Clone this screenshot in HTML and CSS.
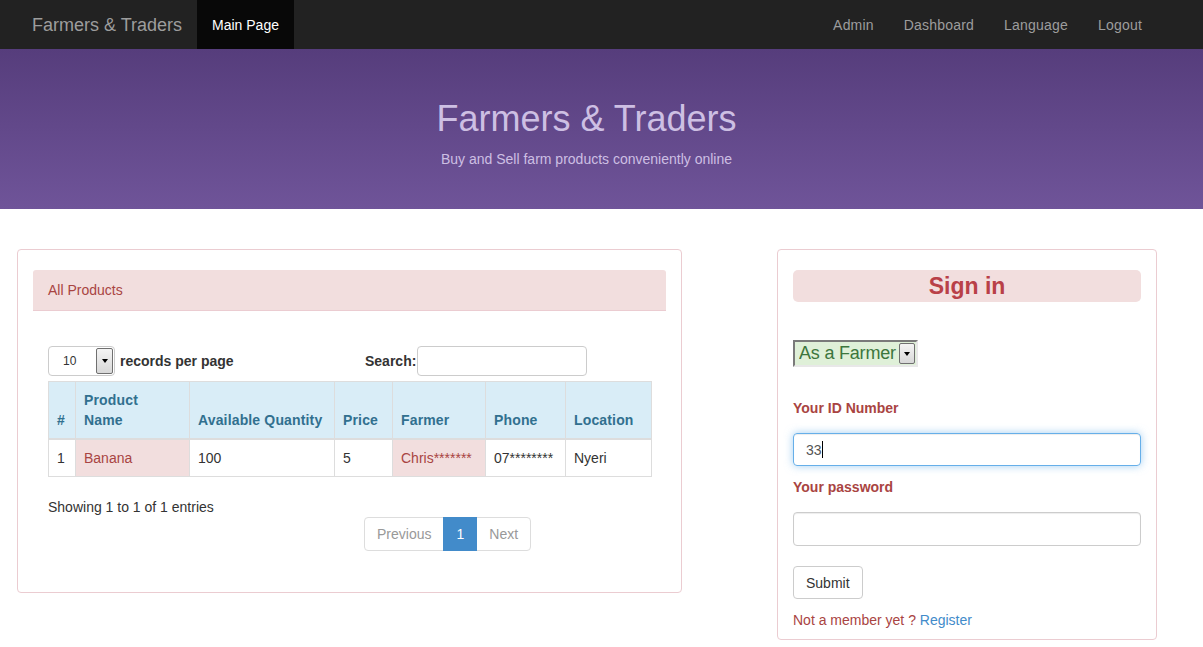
FILE: index.html
```html
<!DOCTYPE html>
<html lang="en">
<head>
<meta charset="utf-8">
<title>Farmers &amp; Traders</title>
<link rel="stylesheet" href="styles.css">
</head>
<body>
<nav class="navbar">
  <a class="brand" href="#">Farmers &amp; Traders</a>
  <ul class="nav">
    <li class="active"><a href="#">Main Page</a></li>
  </ul>
  <ul class="nav nav-right">
    <li><a href="#">Admin</a></li>
    <li><a href="#">Dashboard</a></li>
    <li><a href="#">Language</a></li>
    <li><a href="#">Logout</a></li>
  </ul>
</nav>

<header class="jumbotron">
  <h1>Farmers &amp; Traders</h1>
  <p>Buy and Sell farm products conveniently online</p>
</header>

<main class="content">
  <section class="panel panel-products">
    <div class="panel-heading">All Products</div>
    <div class="dt-wrapper">
      <div class="dt-top">
        <div class="length">
          <div class="mini-select"><span class="mini-val">10</span><span class="arrow-btn"><span class="tri"></span></span></div>
          <span class="bold-label">records per page</span>
        </div>
        <div class="search">
          <span class="bold-label">Search:</span>
          <div class="search-input"></div>
        </div>
      </div>
      <table class="products">
        <colgroup>
          <col class="c-num"><col class="c-name"><col class="c-qty"><col class="c-price"><col class="c-farmer"><col class="c-phone"><col class="c-loc">
        </colgroup>
        <thead>
          <tr>
            <th>#</th><th>Product<br>Name</th><th>Available Quantity</th><th>Price</th><th>Farmer</th><th>Phone</th><th>Location</th>
          </tr>
        </thead>
        <tbody>
          <tr>
            <td>1</td><td class="danger">Banana</td><td>100</td><td>5</td><td class="danger">Chris*******</td><td>07********</td><td>Nyeri</td>
          </tr>
        </tbody>
      </table>
      <div class="dt-info">Showing 1 to 1 of 1 entries</div>
      <ul class="pagination">
        <li class="disabled"><a href="#">Previous</a></li>
        <li class="current"><a href="#">1</a></li>
        <li class="disabled"><a href="#">Next</a></li>
      </ul>
    </div>
  </section>

  <section class="panel panel-signin">
    <h2 class="signin-title">Sign in</h2>
    <div class="role-select"><span class="role-text">As a Farmer</span><span class="arrow-btn role-arrow"><span class="tri"></span></span></div>
    <label class="form-label">Your ID Number</label>
    <div class="form-control focused">33<span class="caret"></span></div>
    <label class="form-label">Your password</label>
    <div class="form-control"></div>
    <button class="btn" type="button">Submit</button>
    <p class="member">Not a member yet ? <a href="#">Register</a></p>
  </section>
</main>
</body>
</html>
```

FILE: styles.css
```css
* { box-sizing: border-box; }
html, body { margin: 0; padding: 0; }
body {
  font-family: "Liberation Sans", Arial, Helvetica, sans-serif;
  font-size: 14px;
  line-height: 20px;
  color: #333;
  background: #fff;
}
a { text-decoration: none; }

/* navbar */
.navbar {
  display: flex;
  align-items: stretch;
  height: 49px;
  background: #222;
  padding: 0 46px 0 17px;
}
.brand {
  display: flex;
  align-items: center;
  padding: 0 15px;
  font-size: 18px;
  color: #9d9d9d;
}
.nav {
  display: flex;
  list-style: none;
  margin: 0;
  padding: 0;
}
.nav li a {
  display: flex;
  align-items: center;
  height: 49px;
  padding: 0 15px;
  color: #9d9d9d;
}
.nav li.active a { background: #080808; color: #fff; }
.nav-right { margin-left: auto; }
.nav-right li a { letter-spacing: 0.2px; }

/* jumbotron */
.jumbotron {
  height: 160px;
  padding: 50px 30px 0 0;
  text-align: center;
  background: linear-gradient(to bottom, #563d7c 0%, #6f5499 100%);
  color: #cdbfe3;
}
.jumbotron h1 {
  margin: 0;
  font-size: 36px;
  line-height: 40px;
  font-weight: normal;
}
.jumbotron p {
  margin: 10px 0 0;
  font-size: 14px;
  line-height: 20px;
}

/* content */
.content {
  display: flex;
  align-items: flex-start;
  padding: 40px 0 0 17px;
}
.panel {
  border: 1px solid #ebccd1;
  border-radius: 4px;
  background: #fff;
  padding: 20px 15px;
}
.panel-products { width: 665px; padding-bottom: 41px; }
.panel-signin { width: 380px; margin-left: 95px; padding-bottom: 9px; }

.panel-heading {
  height: 41px;
  line-height: 40px;
  padding: 0 15px;
  background: #f2dede;
  color: #a94442;
  border-bottom: 1px solid #ebccd1;
  border-radius: 3px 3px 0 0;
}
.dt-wrapper { padding: 35px 15px 0; }
.dt-top {
  display: flex;
  align-items: center;
  height: 30px;
  margin-bottom: 5px;
}
.length { display: flex; align-items: center; width: 317px; }
.bold-label { font-weight: bold; color: #333; }
.mini-select {
  position: relative;
  width: 67px;
  height: 30px;
  border: 1px solid #ccc;
  border-radius: 4px;
  background: #fff;
  margin-right: 5px;
}
.mini-val {
  position: absolute;
  left: 14px;
  top: 4px;
  font-size: 12px;
}
.arrow-btn {
  display: flex;
  align-items: center;
  justify-content: center;
  width: 17px;
  background: linear-gradient(#f4f4f4, #d8d8d8);
  border: 1px solid #707070;
  border-radius: 2px;
}
.mini-select .arrow-btn {
  position: absolute;
  right: 1px;
  top: 1px;
  bottom: 1px;
}
.tri {
  width: 0; height: 0;
  border-left: 3.5px solid transparent;
  border-right: 3.5px solid transparent;
  border-top: 4px solid #000;
}
.search { display: flex; align-items: center; }
.search-input {
  width: 170px;
  height: 30px;
  border: 1px solid #ccc;
  border-radius: 4px;
  margin-left: 1px;
}

/* table */
.products {
  width: 603px;
  table-layout: fixed;
  border-collapse: collapse;
}
.c-num { width: 27px; }
.c-name { width: 114px; }
.c-qty { width: 145px; }
.c-price { width: 58px; }
.c-farmer { width: 93px; }
.c-phone { width: 80px; }
.c-loc { width: 86px; }
.products th, .products td {
  border: 1px solid #ddd;
  padding: 8px;
  text-align: left;
  vertical-align: bottom;
}
.products th {
  background: #d9edf7;
  color: #31708f;
  font-weight: bold;
  border-bottom: 2px solid #ddd;
  letter-spacing: 0.15px;
}
.products td { vertical-align: top; }
.products td.danger { background: #f2dede; color: #a94442; }

.dt-info { margin-top: 20px; }
.pagination {
  display: flex;
  list-style: none;
  margin: 0 0 0 316px;
  padding: 0;
}
.pagination li a {
  display: block;
  padding: 6px 12px;
  line-height: 20px;
  border: 1px solid #ddd;
  margin-left: -1px;
  color: #999;
  background: #fff;
}
.pagination li:first-child a { border-radius: 4px 0 0 4px; margin-left: 0; }
.pagination li:last-child a { border-radius: 0 4px 4px 0; }
.pagination li.current a {
  background: #428bca;
  border-color: #428bca;
  color: #fff;
  position: relative;
}

/* sign in */
.signin-title {
  margin: 0;
  height: 32px;
  line-height: 32px;
  background: #f2dede;
  border-radius: 5px;
  text-align: center;
  color: #b94047;
  font-size: 23px;
  font-weight: bold;
}
.role-select {
  display: inline-flex;
  align-items: stretch;
  margin-top: 38px;
  height: 27px;
  width: 125px;
  white-space: nowrap;
  background: #dff0d8;
  border: 2px solid #7a7a7a;
  border-right-color: #e8e8e8;
  border-bottom-color: #e8e8e8;
  color: #3c763d;
  font-size: 18px;
  line-height: 23px;
  padding: 0 1px 0 4px;
}
.role-text { flex: 1; min-width: 0; overflow: hidden; letter-spacing: -0.2px; }
.role-arrow { width: 16px; flex: none; margin: 1px 0; }
.form-label {
  display: block;
  margin-top: 31px;
  font-weight: bold;
  color: #a94442;
}
.form-label + .form-control { margin-top: 15px; }
.form-control {
  height: 34px;
  border: 1px solid #ccc;
  border-radius: 4px;
  padding: 6px 12px;
  color: #555;
  box-shadow: inset 0 1px 1px rgba(0,0,0,.075);
}
.form-control.focused {
  height: 33px;
  border-color: #66afe9;
  box-shadow: inset 0 1px 1px rgba(0,0,0,.075), 0 0 8px rgba(102,175,233,.6);
}
.form-control.focused + .form-label { margin-top: 11px; }
.caret {
  display: inline-block;
  width: 1px;
  height: 17px;
  background: #000;
  vertical-align: -3px;
}
.btn {
  display: block;
  margin-top: 20px;
  height: 33px;
  padding: 6px 12px;
  font-family: inherit;
  font-size: 14px;
  line-height: 20px;
  color: #333;
  background: #fff;
  border: 1px solid #ccc;
  border-radius: 4px;
}
.member {
  margin: 11px 0 0;
  color: #a94442;
}
.member a { color: #428bca; }
```
